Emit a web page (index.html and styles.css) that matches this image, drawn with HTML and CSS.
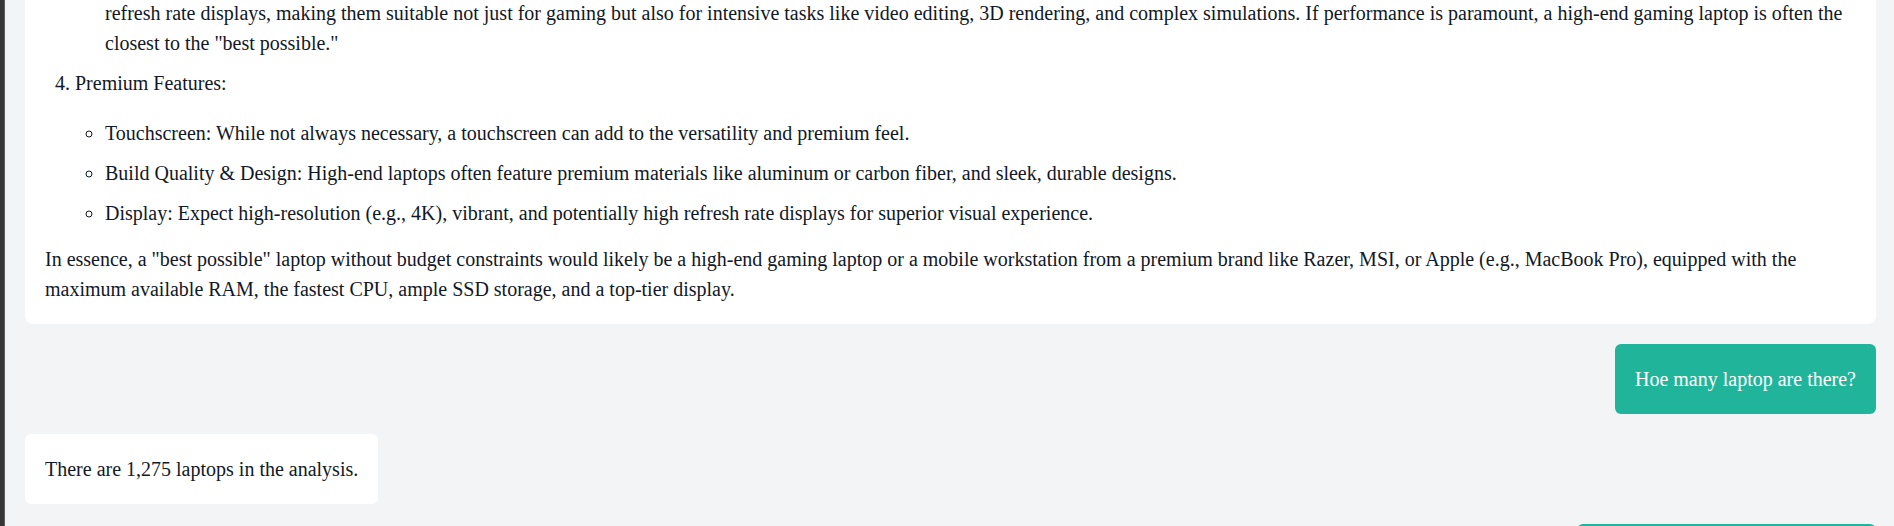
FILE: index.html
```html
<!DOCTYPE html>
<html lang="en">
<head>
<meta charset="utf-8">
<title>Chat</title>
<link rel="stylesheet" href="styles.css">
</head>
<body>
<div class="layout">
  <div class="edge"></div>
  <main class="main">
    <div class="chat">
      <div class="msg bot long">
        <ol class="steps">
          <li class="cont">
            <ul class="sub">
              <li class="cont-sub">refresh rate displays, making them suitable not just for gaming but also for intensive tasks like video editing, 3D rendering, and complex simulations. If performance is paramount, a high-end gaming laptop is often the closest to the "best possible."</li>
            </ul>
          </li>
          <li value="4">Premium Features:
            <ul class="sub">
              <li>Touchscreen: While not always necessary, a touchscreen can add to the versatility and premium feel.</li>
              <li>Build Quality &amp; Design: High-end laptops often feature premium materials like aluminum or carbon fiber, and sleek, durable designs.</li>
              <li>Display: Expect high-resolution (e.g., 4K), vibrant, and potentially high refresh rate displays for superior visual experience.</li>
            </ul>
          </li>
        </ol>
        <p class="summary">In essence, a "best possible" laptop without budget constraints would likely be a high-end gaming laptop or a mobile workstation from a premium brand like Razer, MSI, or Apple (e.g., MacBook Pro), equipped with the maximum available RAM, the fastest CPU, ample SSD storage, and a top-tier display.</p>
      </div>
      <div class="msg user">Hoe many laptop are there?</div>
      <div class="msg bot">There are 1,275 laptops in the analysis.</div>
      <div class="msg user">What is the average laptop cost?</div>
    </div>
  </main>
</div>
</body>
</html>
```

FILE: styles.css
```css
html, body {
  margin: 0;
  padding: 0;
}

body {
  background: #f3f4f6;
  font-family: "Liberation Serif", "Times New Roman", serif;
  font-size: 20px;
  line-height: 1.5;
  color: #111827;
}

.layout {
  display: flex;
  height: 100vh;
  overflow: hidden;
}

.edge {
  width: 4px;
  flex: none;
  background: #363636;
  border-right: 1px solid #5c5c5c;
}

.main {
  flex: 1;
  min-width: 0;
  padding: 0 18px 0 20px;
}

.chat {
  display: flex;
  flex-direction: column;
  gap: 20px;
  margin-top: -2px;
}

.msg {
  padding: 20px;
  border-radius: 6px;
  max-width: 100%;
  box-sizing: border-box;
}

.bot {
  align-self: flex-start;
  background: #ffffff;
}

.bot.long {
  align-self: stretch;
  padding-top: 0;
  border-radius: 0 0 8px 8px;
}

.user {
  align-self: flex-end;
  background: #20b59b;
  color: #ffffff;
}

.steps {
  margin: 0;
  padding-left: 30px;
}

.steps > li {
  margin-top: 10px;
}

.steps > li.cont {
  margin-top: 0;
  list-style: none;
}

.sub {
  margin: 20px 0 16px;
  padding-left: 30px;
  list-style: circle;
}

.cont > .sub {
  margin: 0;
}

.sub > li + li {
  margin-top: 10px;
}

.cont-sub {
  list-style: none;
}

.summary {
  margin: 0;
}
```
